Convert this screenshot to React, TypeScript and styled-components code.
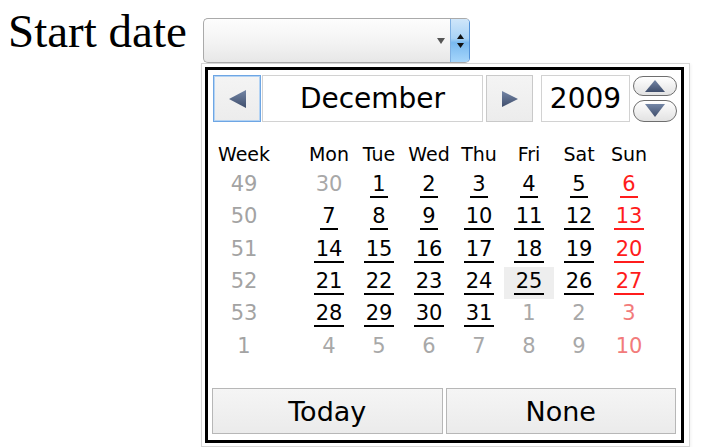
import React from "react";
import styled, { createGlobalStyle } from "styled-components";

const GlobalStyle = createGlobalStyle`
  body {
    margin: 8px;
    background: #ffffff;
    overflow: hidden;
  }
`;

const Page = styled.div`
  display: flex;
  align-items: flex-start;
`;

const Label = styled.div`
  width: 195px;
  font-family: "Liberation Serif", "Times New Roman", serif;
  font-size: 47px;
  line-height: 47px;
  color: #000;
  white-space: nowrap;
`;

const Field = styled.div`
  display: flex;
  flex-direction: column;
  align-items: flex-start;
  margin-top: 10px;
`;

const SelectBox = styled.div`
  box-sizing: border-box;
  width: 267px;
  height: 45px;
  display: flex;
  border: 1px solid #aaaaaa;
  border-right-color: #4f8fd6;
  border-radius: 5px;
  overflow: hidden;
  background: linear-gradient(#fdfdfd, #f3f3f3 55%, #e7e7e7);
`;

const SelectBody = styled.div`
  flex: 1;
  display: flex;
  align-items: center;
  justify-content: flex-end;
  padding-right: 5px;
`;

const Stepper = styled.div`
  width: 18px;
  display: flex;
  flex-direction: column;
  align-items: center;
  justify-content: center;
  gap: 4px;
  border-left: 1px solid #7fb0e2;
  background: linear-gradient(#cfe6fa, #a9d3f6 45%, #79b9ef 55%, #a6d6fb);
`;

const Popup = styled.div`
  margin-left: -2px;
  background: #fff;
  border: 1px solid #d6d6d6;
  padding: 3px 5px 3px 3px;
  box-shadow: 1px 1px 3px rgba(0, 0, 0, 0.06);
`;

const Frame = styled.div`
  box-sizing: border-box;
  width: 479px;
  height: 376px;
  border: 3px solid #000;
  display: flex;
  flex-direction: column;
  font-family: "DejaVu Sans", Verdana, sans-serif;
  color: #000;
`;

const HeaderBar = styled.div`
  display: flex;
  height: 47px;
  margin: 5px 4px 0 5px;
`;

const NavButton = styled.div<{ $w: number; $focused?: boolean; $ml?: number }>`
  box-sizing: border-box;
  width: ${(p) => p.$w}px;
  margin-left: ${(p) => p.$ml || 0}px;
  display: flex;
  align-items: center;
  justify-content: center;
  background: linear-gradient(#f4f4f4, #ececec);
  border: 1px solid ${(p) => (p.$focused ? "#6ea6e4" : "#c9c9c9")};
  box-shadow: ${(p) => (p.$focused ? "inset 0 0 0 1px #b4d3f3" : "none")};
`;

const TextBox = styled.div<{ $w: number; $ml: number }>`
  box-sizing: border-box;
  width: ${(p) => p.$w}px;
  margin-left: ${(p) => p.$ml}px;
  display: flex;
  align-items: center;
  justify-content: center;
  background: #fff;
  border: 1px solid #d2d2d2;
  font-size: 28px;
`;

const Spinner = styled.div`
  width: 44px;
  margin-left: 3px;
  display: flex;
  flex-direction: column;
  gap: 4px;
  padding-top: 1px;
`;

const SpinPill = styled.div<{ $h: number }>`
  box-sizing: border-box;
  height: ${(p) => p.$h}px;
  display: flex;
  align-items: center;
  justify-content: center;
  border: 1.5px solid #6e6e6e;
  border-radius: 12px;
  background: linear-gradient(#ffffff, #e2e2e2);
`;

const DayHead = styled.div`
  display: flex;
  height: 33px;
  margin-top: 15px;
  padding-left: 5px;
  font-size: 19px;
`;

const Row = styled.div`
  display: flex;
  height: 32.33px;
  padding-left: 5px;
`;

const WeekCell = styled.div`
  width: 62px;
  margin-right: 29px;
  display: flex;
  align-items: center;
  justify-content: center;
`;

const DayCell = styled.div<{ $selected?: boolean }>`
  width: 50px;
  display: flex;
  align-items: center;
  justify-content: center;
  background: ${(p) => (p.$selected ? "#eeeeee" : "transparent")};
`;

const HeadText = styled.span`
  line-height: 20px;
`;

const Num = styled.span<{ $color: string; $line: boolean }>`
  display: inline-block;
  font-size: 21px;
  line-height: 20px;
  padding: 0 2px 2px;
  color: ${(p) => p.$color};
  border-bottom: 2px solid ${(p) => (p.$line ? p.$color : "transparent")};
`;

const Footer = styled.div`
  display: flex;
  gap: 3px;
  margin: auto 5px 6px 4px;
`;

const FootButton = styled.div`
  box-sizing: border-box;
  flex: 1;
  height: 46px;
  display: flex;
  align-items: center;
  justify-content: center;
  border: 1px solid #b7b7b7;
  background: linear-gradient(#f5f5f5, #ebebeb);
  font-size: 27px;
`;

const Tri = ({ dir, w, h }: { dir: "left" | "right" | "up" | "down"; w: number; h: number }) => {
  const pts = {
    left: `${w},0 ${w},${h} 0,${h / 2}`,
    right: `0,0 0,${h} ${w},${h / 2}`,
    up: `${w / 2},0 ${w},${h} 0,${h}`,
    down: `0,0 ${w},0 ${w / 2},${h}`,
  }[dir];
  const id = `g-${dir}-${w}-${h}`;
  return (
    <svg width={w} height={h} viewBox={`0 0 ${w} ${h}`}>
      <defs>
        <linearGradient id={id} x1="0" y1="0" x2="0" y2="1">
          <stop offset="0" stopColor="#7486a6" />
          <stop offset="1" stopColor="#3f4e6c" />
        </linearGradient>
      </defs>
      <polygon points={pts} fill={`url(#${id})`} />
    </svg>
  );
};

const Small = ({ dir, color }: { dir: "up" | "down"; color: string }) => (
  <svg width="7" height="5" viewBox="0 0 7 5">
    <polygon points={dir === "up" ? "3.5,0 7,5 0,5" : "0,0 7,0 3.5,5"} fill={color} />
  </svg>
);

type Day = { n: number; out?: boolean; sun?: boolean; sel?: boolean };

const weeks: { w: number; days: Day[] }[] = [
  { w: 49, days: [{ n: 30, out: true }, { n: 1 }, { n: 2 }, { n: 3 }, { n: 4 }, { n: 5 }, { n: 6, sun: true }] },
  { w: 50, days: [{ n: 7 }, { n: 8 }, { n: 9 }, { n: 10 }, { n: 11 }, { n: 12 }, { n: 13, sun: true }] },
  { w: 51, days: [{ n: 14 }, { n: 15 }, { n: 16 }, { n: 17 }, { n: 18 }, { n: 19 }, { n: 20, sun: true }] },
  { w: 52, days: [{ n: 21 }, { n: 22 }, { n: 23 }, { n: 24 }, { n: 25, sel: true }, { n: 26 }, { n: 27, sun: true }] },
  {
    w: 53,
    days: [{ n: 28 }, { n: 29 }, { n: 30 }, { n: 31 }, { n: 1, out: true }, { n: 2, out: true }, { n: 3, out: true, sun: true }],
  },
  {
    w: 1,
    days: [4, 5, 6, 7, 8, 9, 10].map((n, i) => ({ n, out: true, sun: i === 6 })),
  },
];

const dayNames = ["Mon", "Tue", "Wed", "Thu", "Fri", "Sat", "Sun"];

const colorOf = (d: Day) => {
  if (d.sun) return d.out ? "#f27b7b" : "#ff1c1c";
  return d.out ? "#a8a8a8" : "#000";
};

export default function App() {
  return (
    <>
      <GlobalStyle />
      <Page>
        <Label>Start date</Label>
        <Field>
          <SelectBox>
            <SelectBody>
              <svg width="8" height="6" viewBox="0 0 8 6">
                <polygon points="0,0 8,0 4,6" fill="#555" />
              </svg>
            </SelectBody>
            <Stepper>
              <Small dir="up" color="#111" />
              <Small dir="down" color="#111" />
            </Stepper>
          </SelectBox>
          <Popup>
            <Frame>
              <HeaderBar>
                <NavButton $w={48} $focused>
                  <Tri dir="left" w={17} h={18} />
                </NavButton>
                <TextBox $w={221} $ml={1}>December</TextBox>
                <NavButton $w={47} $ml={3}>
                  <Tri dir="right" w={16} h={16} />
                </NavButton>
                <TextBox $w={89} $ml={8}>2009</TextBox>
                <Spinner>
                  <SpinPill $h={20}>
                    <Tri dir="up" w={20} h={12} />
                  </SpinPill>
                  <SpinPill $h={23}>
                    <Tri dir="down" w={20} h={13} />
                  </SpinPill>
                </Spinner>
              </HeaderBar>
              <DayHead>
                <WeekCell>
                  <HeadText>Week</HeadText>
                </WeekCell>
                {dayNames.map((d) => (
                  <DayCell key={d}>
                    <HeadText>{d}</HeadText>
                  </DayCell>
                ))}
              </DayHead>
              {weeks.map((wk) => (
                <Row key={wk.w}>
                  <WeekCell>
                    <Num $color="#a3a3a3" $line={false}>
                      {wk.w}
                    </Num>
                  </WeekCell>
                  {wk.days.map((d, i) => (
                    <DayCell key={i} $selected={d.sel}>
                      <Num $color={colorOf(d)} $line={!d.out}>
                        {d.n}
                      </Num>
                    </DayCell>
                  ))}
                </Row>
              ))}
              <Footer>
                <FootButton>Today</FootButton>
                <FootButton>None</FootButton>
              </Footer>
            </Frame>
          </Popup>
        </Field>
      </Page>
    </>
  );
}
